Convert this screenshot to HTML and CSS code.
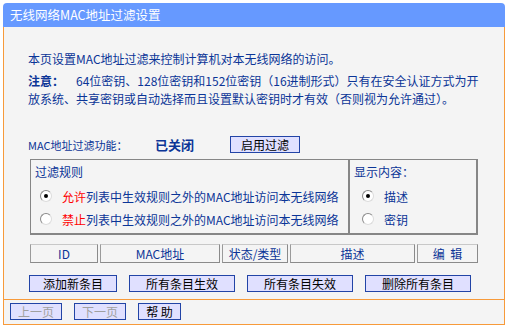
FILE: index.html
```html
<!DOCTYPE html>
<html lang="zh-CN">
<head>
<meta charset="utf-8">
<title>无线网络MAC地址过滤设置</title>
<link rel="stylesheet" href="styles.css">
</head>
<body>
<div class="panel">
  <div class="title">无线网络MAC地址过滤设置</div>
  <div class="content">
    <p class="intro">本页设置MAC地址过滤来控制计算机对本无线网络的访问。</p>
    <p class="note"><b>注意：</b>64位密钥、128位密钥和152位密钥（16进制形式）只有在安全认证方式为开<br>放系统、共享密钥或自动选择而且设置默认密钥时才有效（否则视为允许通过）。</p>
    <div class="status">
      <span class="status-label">MAC地址过滤功能：</span>
      <span class="status-value">已关闭</span>
      <button class="btn btn-enable">启用过滤</button>
    </div>
    <div class="rules">
      <div class="rules-left">
        <div class="rules-title">过滤规则</div>
        <div class="radio-row"><span class="radio checked"></span><span class="red">允许</span>列表中生效规则之外的MAC地址访问本无线网络</div>
        <div class="radio-row"><span class="radio"></span><span class="red">禁止</span>列表中生效规则之外的MAC地址访问本无线网络</div>
      </div>
      <div class="rules-right">
        <div class="rules-title">显示内容：</div>
        <div class="radio-row"><span class="radio checked"></span>描述</div>
        <div class="radio-row"><span class="radio"></span>密钥</div>
      </div>
    </div>
    <div class="list-head">
      <div class="cell c-id">ID</div>
      <div class="cell c-mac">MAC地址</div>
      <div class="cell c-state">状态/类型</div>
      <div class="cell c-desc">描述</div>
      <div class="cell c-edit">编&nbsp;&nbsp;辑</div>
    </div>
    <div class="actions">
      <button class="btn b-add">添加新条目</button>
      <button class="btn b-all">所有条目生效</button>
      <button class="btn b-all">所有条目失效</button>
      <button class="btn b-all">删除所有条目</button>
    </div>
  </div>
  <div class="footer">
    <button class="btn b-nav disabled">上一页</button>
    <button class="btn b-nav disabled">下一页</button>
    <button class="btn b-help">帮&nbsp;助</button>
  </div>
</div>
</body>
</html>
```
FILE: styles.css
```css
* { box-sizing: border-box; }
html, body { margin: 0; padding: 0; background: #ffffff; }
body {
  font-family: "Noto Sans CJK SC", "DejaVu Sans", sans-serif;
  font-size: 12px;
  color: #0b3597;
}
.panel {
  margin: 3px 0 0 3px;
  width: 502px;
}
.title {
  height: 24px;
  background: #6699ff;
  color: #ffffff;
  font-size: 12.5px;
  line-height: 23px;
  padding-left: 7px;
  border-radius: 4px 4px 0 0;
}
.content {
  background: #f4f4f4;
  border-left: 1px solid #f79a3a;
  border-right: 1px solid #f79a3a;
  border-bottom: 1px solid #f79a3a;
  padding: 23px 0 7px 0;
}
p { margin: 0; }
.intro {
  margin-left: 24px;
  line-height: 18px;
}
.note {
  margin-left: 24px;
  margin-top: 4px;
  line-height: 18px;
  white-space: nowrap;
}
.note b { font-weight: bold; margin-right: 12px; }
.status {
  margin-top: 28px;
  margin-left: 24px;
  height: 17px;
  display: flex;
  align-items: center;
}
.status-label { width: 127px; font-size: 11px; }
.status-value {
  width: 75px;
  font-weight: bold;
  font-size: 13px;
}
.btn {
  font-family: "Noto Sans CJK SC", "DejaVu Sans", sans-serif;
  font-size: 12px;
  color: #000000;
  background: #e0e0ff;
  border: 1px solid #2244a6;
  height: 17px;
  padding: 0;
  line-height: 14px;
  border-radius: 0;
}
.btn-enable { width: 70px; }
.rules {
  margin-top: 6px;
  margin-left: 26px;
  width: 448px;
  height: 76px;
  border: 1px solid #868686;
  border-right-width: 2px;
  border-bottom-width: 2px;
  display: grid;
  grid-template-columns: 319px 1fr;
}
.rules-left { border-right: 2px solid #868686; padding-left: 4px; }
.rules-right { padding-left: 4px; }
.rules-title {
  margin-top: 4px;
  line-height: 16px;
  height: 16px;
  margin-bottom: 6px;
}
.radio-row {
  height: 20px;
  display: flex;
  align-items: center;
  margin-bottom: 3px;
  padding-left: 5px;
}
.rules-right .radio-row { padding-left: 8px; }
.radio {
  width: 12px;
  height: 12px;
  border-radius: 50%;
  background: #ffffff;
  border: 1px solid #8a8a8a;
  border-right-color: #dcdcdc;
  border-bottom-color: #dcdcdc;
  margin-right: 10px;
  position: relative;
  flex: none;
}
.radio.checked::after {
  content: "";
  position: absolute;
  left: 3px;
  top: 3px;
  width: 4px;
  height: 4px;
  border-radius: 50%;
  background: #000000;
}
.red { color: #ff0000; }
.list-head {
  margin-top: 9px;
  margin-left: 26px;
  width: 448px;
  height: 19px;
  display: flex;
  gap: 2px;
}
.cell {
  height: 19px;
  border: 1px solid #8a8a8a;
  border-top-color: #c8c8c8;
  border-left-color: #9a9a9a;
  text-align: center;
  line-height: 17px;
}
.c-id { width: 68px; }
.c-mac { width: 120px; }
.c-state { width: 66px; }
.c-desc { width: 125px; }
.c-edit { width: 61px; }
.actions {
  margin-top: 12px;
  margin-left: 25px;
  display: flex;
  gap: 12px;
}
.b-add { width: 88px; }
.b-all { width: 106px; }
.footer {
  height: 25px;
  background: #f4f4f4;
  border-left: 1px solid #f79a3a;
  border-right: 1px solid #f79a3a;
  border-bottom: 1px solid #f79a3a;
  padding: 3px 0 0 6px;
  display: flex;
  gap: 12px;
  align-items: flex-start;
}
.b-nav { width: 52px; }
.b-help { width: 43px; }
.disabled { color: #a0a0a0; }
```
